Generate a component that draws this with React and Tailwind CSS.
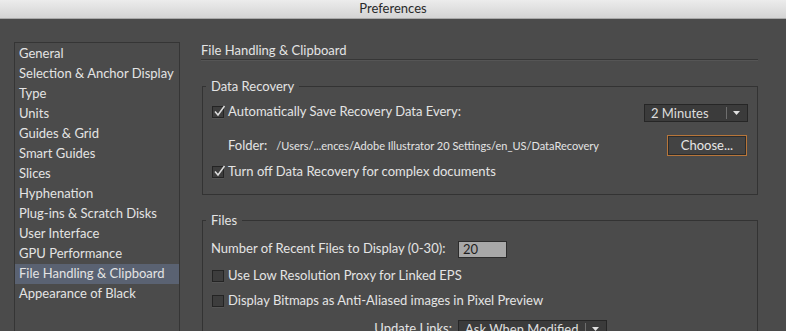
import React from 'react';

const categories = [
  'General',
  'Selection & Anchor Display',
  'Type',
  'Units',
  'Guides & Grid',
  'Smart Guides',
  'Slices',
  'Hyphenation',
  'Plug-ins & Scratch Disks',
  'User Interface',
  'GPU Performance',
  'File Handling & Clipboard',
  'Appearance of Black',
];

function Checkbox({ checked }) {
  return (
    <span className="relative block w-[12px] h-[12px] shrink-0 border border-[#242424] bg-[#3d3d3d] shadow-[0_1px_0_#555]">
      {checked && (
        <svg className="absolute left-[0px] top-[-2px]" width="13" height="13" viewBox="0 0 13 13">
          <path d="M2 6.5 L5 10 L11.5 1" fill="none" stroke="#dcdcdc" strokeWidth="1.5" />
        </svg>
      )}
    </span>
  );
}

function Dropdown({ label, width }) {
  return (
    <div
      className={`flex items-center h-[18px] border border-[#262626] bg-[#3b3b3b] text-[#dedede] ${width}`}
    >
      <span className="flex-1 pl-[6px] leading-none">{label}</span>
      <span className="w-[1px] h-[12px] bg-[#6e6e6e] mr-[5px]" />
      <svg width="9" height="6" viewBox="0 0 9 6" className="mr-[6px]">
        <path d="M1 1 L8 1 L4.5 5 Z" fill="#e0e0e0" />
      </svg>
    </div>
  );
}

export default function App() {
  return (
    <div
      className="w-[786px] h-[331px] overflow-hidden bg-[#4b4b4b] text-[#e4e4e4] text-[13px] flex flex-col"
      style={{ fontFamily: '"Lato", "Open Sans", sans-serif' }}
    >
      {/* Title bar */}
      <div className="h-[19px] shrink-0 flex items-center justify-center bg-gradient-to-b from-[#ececec] to-[#d4d4d4] border-b border-[#a9a9a9] text-[#2a2a2a] text-[13px]">
        Preferences
      </div>

      <div className="flex flex-1 min-h-0">
        {/* Category list */}
        <div className="pl-[14px] pt-[23px]">
          <ul className="w-[166px] h-[400px] border border-[#353535] pt-[1px]">
            {categories.map((c) => (
              <li
                key={c}
                className={`h-[20px] flex items-center pl-[4px] ${
                  c === 'File Handling & Clipboard' ? 'bg-[#5a6272]' : ''
                }`}
              >
                {c}
              </li>
            ))}
          </ul>
        </div>

        {/* Panel */}
        <div className="flex-1 ml-[21px] mr-[28px] pt-[23px]">
          <div className="h-[18px] pt-[1px] border-b border-[#363636] shadow-[0_1px_0_#555] flex items-center">
            File Handling &amp; Clipboard
          </div>

          <fieldset className="mt-[18px] ml-[1px] border border-[#333] pb-[10px]">
            <legend className="ml-[3px] px-[5px] leading-[16px]">Data Recovery</legend>
            <div className="pt-[6px] px-[9px]">
              <div className="h-[24px] flex items-center">
                <Checkbox checked />
                <span className="ml-[4px] flex-1">Automatically Save Recovery Data Every:</span>
                <span className="translate-y-[1px]">
                  <Dropdown label="2 Minutes" width="w-[104px]" />
                </span>
              </div>
              <div className="mt-[9px] h-[24px] flex items-center">
                <span className="ml-[16px] translate-y-[1px]">Folder:</span>
                <span className="ml-[9px] flex-1 text-[11px] translate-y-[1px]">
                  /Users/...ences/Adobe Illustrator 20 Settings/en_US/DataRecovery
                </span>
                <button className="w-[80px] h-[21px] mr-[1px] border border-[#b8763a] bg-[#434343] shadow-[inset_0_0_0_1px_#2c2c2c] text-[#e6e6e6] leading-none">
                  Choose...
                </button>
              </div>
              <div className="mt-[3px] h-[24px] flex items-center">
                <Checkbox checked />
                <span className="ml-[4px]">Turn off Data Recovery for complex documents</span>
              </div>
            </div>
          </fieldset>

          <fieldset className="mt-[17px] ml-[1px] border border-[#333] pb-[10px]">
            <legend className="ml-[3px] px-[5px] leading-[16px]">Files</legend>
            <div className="pt-[10px] px-[8px]">
              <div className="h-[22px] flex items-center">
                <span className="w-[247px]">Number of Recent Files to Display (0-30):</span>
                <div className="w-[49px] h-[17px] bg-[#a8a8a8] border border-[#2c2c2c] text-[#1e1e1e] pl-[4px] flex items-center leading-none">
                  20
                </div>
              </div>
              <div className="mt-[5px] h-[22px] flex items-center pl-[1px]">
                <Checkbox />
                <span className="ml-[4px]">Use Low Resolution Proxy for Linked EPS</span>
              </div>
              <div className="mt-[3px] h-[22px] flex items-center pl-[1px]">
                <Checkbox />
                <span className="ml-[4px]">Display Bitmaps as Anti-Aliased images in Pixel Preview</span>
              </div>
              <div className="mt-[6px] h-[22px] flex items-center">
                <span className="w-[241px] text-right">Update Links:</span>
                <span className="ml-[6px]">
                  <Dropdown label="Ask When Modified" width="w-[149px]" />
                </span>
              </div>
            </div>
          </fieldset>
        </div>
      </div>
    </div>
  );
}
